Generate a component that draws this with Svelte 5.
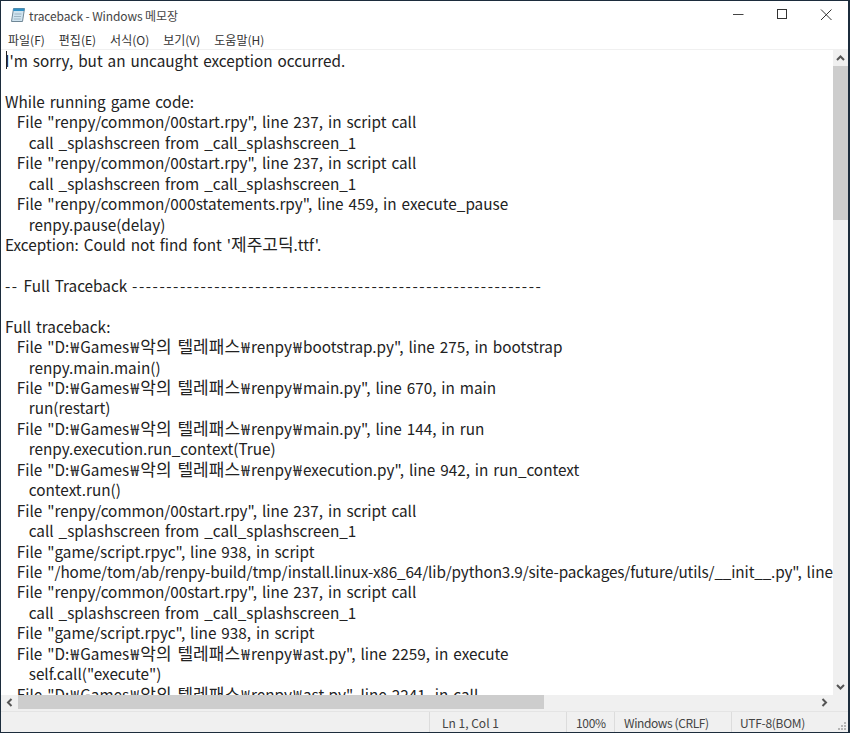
<script>
  const menus = ["파일(F)", "편집(E)", "서식(O)", "보기(V)", "도움말(H)"];

  const lines = [
    "I'm sorry, but an uncaught exception occurred.",
    "",
    "While running game code:",
    '  File "renpy/common/00start.rpy", line 237, in script call',
    "    call _splashscreen from _call_splashscreen_1",
    '  File "renpy/common/00start.rpy", line 237, in script call',
    "    call _splashscreen from _call_splashscreen_1",
    '  File "renpy/common/000statements.rpy", line 459, in execute_pause',
    "    renpy.pause(delay)",
    "Exception: Could not find font '제주고딕.ttf'.",
    "",
    "-- Full Traceback ------------------------------------------------------------",
    "",
    "Full traceback:",
    '  File "D:₩Games₩악의 텔레패스₩renpy₩bootstrap.py", line 275, in bootstrap',
    "    renpy.main.main()",
    '  File "D:₩Games₩악의 텔레패스₩renpy₩main.py", line 670, in main',
    "    run(restart)",
    '  File "D:₩Games₩악의 텔레패스₩renpy₩main.py", line 144, in run',
    "    renpy.execution.run_context(True)",
    '  File "D:₩Games₩악의 텔레패스₩renpy₩execution.py", line 942, in run_context',
    "    context.run()",
    '  File "renpy/common/00start.rpy", line 237, in script call',
    "    call _splashscreen from _call_splashscreen_1",
    '  File "game/script.rpyc", line 938, in script',
    '  File "/home/tom/ab/renpy-build/tmp/install.linux-x86_64/lib/python3.9/site-packages/future/utils/__init__.py", line 441, in raise_',
    '  File "renpy/common/00start.rpy", line 237, in script call',
    "    call _splashscreen from _call_splashscreen_1",
    '  File "game/script.rpyc", line 938, in script',
    '  File "D:₩Games₩악의 텔레패스₩renpy₩ast.py", line 2259, in execute',
    '    self.call("execute")',
    '  File "D:₩Games₩악의 텔레패스₩renpy₩ast.py", line 2241, in call',
  ];

  // glyph widths differ from the original font, so some runs get their own spacing
  function kindOf(text) {
    if (/^ +$/.test(text)) return "indent";
    if (/^--/.test(text)) return "dash";
    if (text === "₩") return "won";
    if (/^[가-힣]/.test(text)) return "wide";
    if (text.startsWith("/home")) return "path";
    return "";
  }

  function runs(line) {
    return line
      .split(/(^ +|[가-힣]+|₩|-{2,}|\/home\S+)/)
      .filter(Boolean)
      .map((text) => ({ text, kind: kindOf(text) }));
  }
</script>

<div class="window">
  <header class="titlebar">
    <svg class="app-icon" width="16" height="16" viewBox="0 0 16 16">
      <path d="M3.500 1.500h11l-2 13H1.500z" fill="#cfe3ef" stroke="#6f8796" />
      <path d="M3.500 1.500h11l-.3 2.500H3.200z" fill="#2f8fc4" />
      <path d="M4.500 7h7M4 9.500h7M3.700 12h7" stroke="#9db4c2" />
    </svg>
    <span class="title">traceback - Windows 메모장</span>
    <div class="controls">
      <svg width="44" height="28" viewBox="0 0 44 28"><path d="M18 13.500h10.500" stroke="#444" /></svg>
      <svg width="44" height="28" viewBox="0 0 44 28"><rect x="18.500" y="8.500" width="9" height="9" fill="none" stroke="#333" /></svg>
      <svg width="44" height="28" viewBox="0 0 44 28"><path d="M18 8.500l10.500 10.500M28.500 8.500L18 19" stroke="#333" /></svg>
    </div>
  </header>

  <nav class="menubar">
    {#each menus as menu}
      <span>{menu}</span>
    {/each}
  </nav>

  <div class="body">
    <div class="editor">
      <div class="caret"></div>
      {#each lines as line}
        <div class="line">{#each runs(line) as run}<span class={run.kind}>{run.text}</span>{/each}</div>
      {/each}
    </div>
    <div class="vscroll">
      <svg width="15" height="16" viewBox="0 0 15 16"><path d="M4 10l3.500-3.500L11 10" fill="none" stroke="#555" stroke-width="2" /></svg>
      <div class="vtrack"><div class="vthumb"></div></div>
      <svg width="15" height="17" viewBox="0 0 15 17"><path d="M4 7l3.500 3.500L11 7" fill="none" stroke="#555" stroke-width="2" /></svg>
    </div>
    <div class="hscroll">
      <svg width="17" height="15" viewBox="0 0 17 15"><path d="M10.500 4L7 7.500 10.500 11" fill="none" stroke="#555" stroke-width="2" /></svg>
      <div class="htrack"><div class="hthumb"></div></div>
      <svg width="17" height="15" viewBox="0 0 17 15"><path d="M6.500 4L10 7.500 6.500 11" fill="none" stroke="#555" stroke-width="2" /></svg>
    </div>
    <div class="corner"></div>
  </div>

  <footer class="statusbar">
    <div class="cell spacer"></div>
    <div class="cell pos">Ln 1, Col 1</div>
    <div class="cell zoom">100%</div>
    <div class="cell eol">Windows (CRLF)</div>
    <div class="cell enc">UTF-8(BOM)</div>
    <svg class="grip" width="12" height="12" viewBox="0 0 12 12" fill="#b5b5b5">
      <rect x="8" y="2" width="2" height="2" />
      <rect x="5" y="5" width="2" height="2" />
      <rect x="8" y="5" width="2" height="2" />
      <rect x="2" y="8" width="2" height="2" />
      <rect x="5" y="8" width="2" height="2" />
      <rect x="8" y="8" width="2" height="2" />
    </svg>
  </footer>
</div>

<style>
  :global(body) {
    margin: 0;
    background: #1c2c3c;
    overflow: hidden;
  }

  .window {
    box-sizing: border-box;
    height: 731px;
    margin: 1px 2px 0 1px;
    display: flex;
    flex-direction: column;
    background: #fff;
    font-family: "Noto Sans CJK KR", "Open Sans", sans-serif;
    color: #333;
  }

  .titlebar {
    height: 28px;
    display: flex;
    align-items: center;
    padding-left: 9px;
    font-size: 12px;
  }

  .app-icon {
    margin-right: 3px;
  }

  .title {
    color: #444;
    letter-spacing: -0.1px;
  }

  .controls {
    margin-left: auto;
    display: flex;
    margin-right: 1px;
  }

  .menubar {
    height: 20px;
    display: flex;
    gap: 14px;
    padding-left: 7px;
    align-items: center;
    font-size: 12px;
    color: #333;
    border-bottom: 1px solid #f0f0f0;
  }

  .body {
    flex: 1;
    min-height: 0;
    display: grid;
    grid-template-columns: 1fr 15px;
    grid-template-rows: 1fr 16px;
  }

  .editor {
    position: relative;
    overflow: hidden;
    padding: 0 0 0 4px;
    font-size: 15.300px;
    line-height: 20.450px;
    word-spacing: 1.500px;
    color: #222;
  }

  .line {
    height: 20.450px;
    white-space: pre;
  }

  .indent {
    letter-spacing: 1px;
  }

  .wide {
    font-size: 17px;
  }

  .won {
    padding: 0 1.250px;
  }

  .dash {
    letter-spacing: 1.530px;
  }

  .path {
    letter-spacing: -0.130px;
  }

  .caret {
    position: absolute;
    left: 5px;
    top: 1px;
    width: 1px;
    height: 18px;
    background: #222;
  }

  .vscroll {
    display: flex;
    flex-direction: column;
    background: #f0f0f0;
  }

  .vtrack {
    flex: 1;
  }

  .vthumb {
    height: 154px;
    background: #cdcdcd;
  }

  .hscroll {
    display: flex;
    background: #f0f0f0;
  }

  .htrack {
    flex: 1;
  }

  .hthumb {
    width: 526px;
    height: 14px;
    background: #cdcdcd;
  }

  .corner {
    background: #f0f0f0;
  }

  .statusbar {
    position: relative;
    height: 20px;
    display: flex;
    align-items: center;
    background: #f0f0f0;
    border-top: 1px solid #e4e4e4;
    font-size: 12px;
    color: #444;
  }

  .cell {
    box-sizing: border-box;
    height: 100%;
    display: flex;
    align-items: center;
    padding-left: 12px;
    border-left: 1px solid #dcdcdc;
  }

  .spacer {
    width: 428px;
    border-left: none;
  }

  .pos {
    width: 137px;
  }

  .zoom {
    width: 48px;
    padding-left: 9px;
    letter-spacing: -0.3px;
  }

  .eol {
    width: 117px;
    padding-left: 9px;
    letter-spacing: -0.4px;
  }

  .enc {
    flex: 1;
    padding-left: 8px;
    letter-spacing: -0.3px;
  }

  .grip {
    position: absolute;
    right: 0;
    bottom: 0;
  }
</style>
